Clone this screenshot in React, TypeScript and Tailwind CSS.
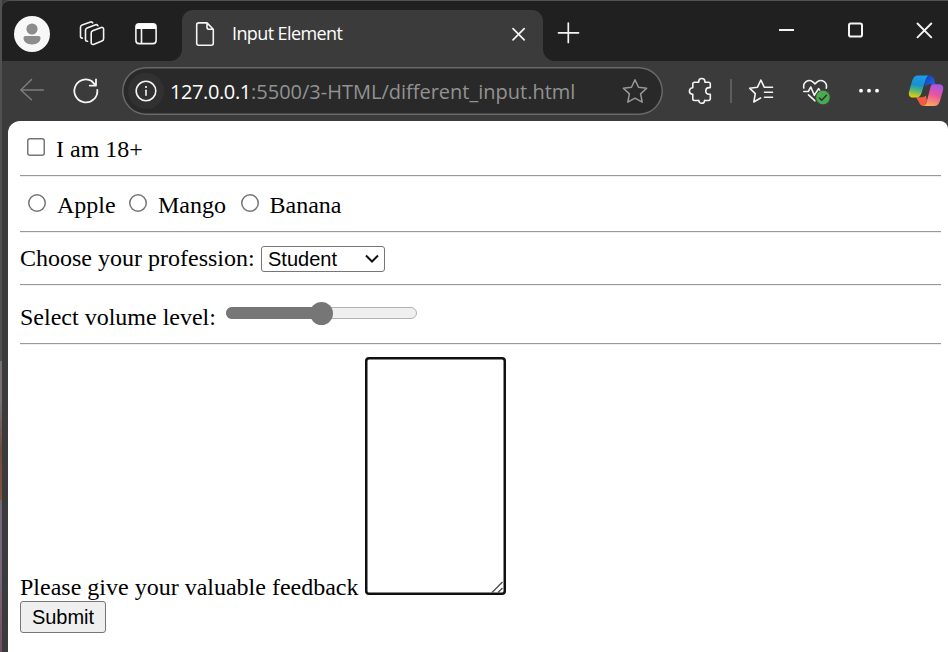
import type { ReactNode } from 'react';

type IconProps = { box: string; size?: number; w?: number; className?: string; children: ReactNode };

// Line icon drawn in window coordinates; `box` selects its area of the toolbar.
function Icon({ box, size = 36, w, className = '', children }: IconProps) {
  return (
    <svg
      viewBox={box}
      width={w ?? size}
      height={size}
      fill="none"
      stroke="#f4f4f4"
      strokeWidth="1.6"
      strokeLinecap="round"
      strokeLinejoin="round"
      className={`shrink-0 ${className}`}
    >
      {children}
    </svg>
  );
}

function TitleBar() {
  return (
    <div className="flex h-[60px] shrink-0 items-start bg-[#202020] pl-3">
      <Icon box="14 16 36 36" className="mt-[15px]">
        <circle cx="32" cy="34" r="18" fill="#f7f7f7" stroke="none" />
        <circle cx="32" cy="29" r="5.6" fill="#8c8c8c" stroke="none" />
        <path d="M25.5 36h13a2 2 0 0 1 2 2c0 4-3.8 6.4-8.5 6.4S23.500 42 23.500 38a2 2 0 0 1 2-2z" fill="#8c8c8c" stroke="none" />
      </Icon>
      <Icon box="74 16 36 36" className="mt-[15px] ml-6">
        <path d="M92.600 30.700l8.700-3.200a1.700 1.700 0 0 1 2.300 1.600v9.600a2.500 2.500 0 0 1-1.700 2.300l-8.400 3.400a1.700 1.700 0 0 1-2.300-1.600v-9.700a2.500 2.500 0 0 1 1.400-2.400z" />
        <path d="M87.600 41.300h-.5a1.600 1.600 0 0 1-1.600-1.600v-9.500a2.500 2.500 0 0 1 1.600-2.300l8.600-3.200a1.800 1.800 0 0 1 2.200 1" />
        <path d="M82.400 38.100h-.3a1.600 1.600 0 0 1-1.600-1.600v-9.300a2.500 2.500 0 0 1 1.600-2.300l8.400-2.900a1.800 1.800 0 0 1 2.200.9" />
      </Icon>
      <Icon box="128 16 36 36" className="mt-[15px] ml-[18px]">
        <rect x="135.900" y="23.900" width="20.200" height="19.700" rx="3.200" />
        <path d="M136 29v-2a3 3 0 0 1 3-3h14a3 3 0 0 1 3 3v2z" fill="#fff" stroke="none" />
        <path d="M141.500 29v14" />
      </Icon>
      <div className="mt-12 ml-[6px] h-3 w-3 bg-[radial-gradient(circle_at_0_0,#202020_11.500px,#3b3b3b_12.500px)]" />
      <div className="mt-[9px] flex h-[51px] w-[360.500px] shrink-0 items-center rounded-t-[11px] bg-[#3b3b3b] pl-[5px]">
        <Icon box="187 16 36 36" className="-mt-[3px]">
          <path d="M207 22.900h-8.300a2 2 0 0 0-2 2v18.300a2 2 0 0 0 2 2h12.600a2 2 0 0 0 2-2v-14zM207 22.900v4.300a2 2 0 0 0 2 2h4.300" />
        </Icon>
        <span className="-mt-[5px] ml-[9px] w-[270px] whitespace-nowrap font-['Open_Sans',sans-serif] text-[18px] leading-6 tracking-[-0.6px] text-white">
          Input Element
        </span>
        <Icon box="507 22 24 24" size={24} className="-mt-[3px] ml-[5px]">
          <path d="M513 28.700l11.200 11.200M524.200 28.700L513 39.900" strokeWidth="1.700" />
        </Icon>
      </div>
      <div className="mt-12 h-3 w-3 bg-[radial-gradient(circle_at_12px_0,#202020_11.500px,#3b3b3b_12.500px)]" />
      <Icon box="555 20 26 26" size={26} className="mt-[19px]">
        <path d="M558.500 32.800h20M568.300 23v19.500" strokeWidth="1.700" />
      </Icon>
      <Icon box="775 18 24 24" size={24} className="mt-[17px] ml-[194.500px]">
        <path d="M779 30h15" strokeWidth="2" strokeLinecap="butt" />
      </Icon>
      <Icon box="843 18 24 24" size={24} className="mt-[17px] ml-11">
        <rect x="849" y="23.500" width="13" height="13" rx="1.800" strokeWidth="2" />
      </Icon>
      <Icon box="912 18 24 24" size={24} className="mt-[17px] ml-[45px]">
        <path d="M917.500 23.500l13.800 13.800M931.300 23.500l-13.800 13.800" strokeWidth="1.900" />
      </Icon>
    </div>
  );
}

function CopilotLogo() {
  return (
    <svg viewBox="908 73 36 36" width="36" height="36" className="ml-[21px] shrink-0">
      <defs>
        <linearGradient id="left" gradientUnits="userSpaceOnUse" x1="920" y1="76" x2="916" y2="98">
          <stop offset="0" stopColor="#1a9dec" />
          <stop offset="0.4" stopColor="#1790cf" />
          <stop offset="0.65" stopColor="#4cb580" />
          <stop offset="1" stopColor="#f4d000" />
        </linearGradient>
        <linearGradient id="right" gradientUnits="userSpaceOnUse" x1="938" y1="84" x2="931" y2="106">
          <stop offset="0" stopColor="#a553ee" />
          <stop offset="0.5" stopColor="#e8569c" />
          <stop offset="1" stopColor="#ffa75c" />
        </linearGradient>
        <linearGradient id="top" gradientUnits="userSpaceOnUse" x1="926" y1="76" x2="935" y2="84">
          <stop offset="0" stopColor="#1740b8" />
          <stop offset="1" stopColor="#2263e5" />
        </linearGradient>
      </defs>
      <path d="M925 75.500h4.500c2.400 0 3.700 1.300 4.400 3.500l1.600 5.200h-5c-2 0-3.800.6-5.200 2.300z" fill="url(#top)" />
      <path d="M916 97.300h4.500c1.800 0 3.300-.3 5.500-1.500l1 5-2.500 5.200h-1c-2.300 0-3.600-1.200-4.300-3.400z" fill="#f45b43" />
      <path d="M918 75.500h10.500c-1.500.8-2.400 2.400-3 4.500l-4 13c-1 3-2.700 4.500-5.500 4.500h-3.200c-3.400 0-4.600-2.600-3.700-6l3-10.500c1-3.500 2.800-5.500 5.900-5.500z" fill="url(#left)" />
      <path d="M933.200 84.200h5.900c3.500 0 4.800 2.600 3.900 6l-3 10.500c-1 3.600-2.800 5.300-5.900 5.300h-10.600c1.800-.7 2.700-2.300 3.300-4.500l3.200-12.500c.7-3 1.300-4.800 3.200-4.800z" fill="url(#right)" />
    </svg>
  );
}

function AddressBar() {
  return (
    <div className="flex h-[60px] shrink-0 items-center bg-[#3b3b3b] pl-3">
      <Icon box="14 73 36 36">
        <path d="M43.300 90H20.800M31.500 79.500L20.800 90l10.700 9.800" stroke="#7d7d7d" strokeWidth="1.500" />
      </Icon>
      <Icon box="68 73 36 36" className="ml-[18px]">
        <path d="M97.300 89.800a11.500 11.500 0 1 1-5.500-8.700M96 79.300v6.300h-6.300M91.500 81l4.500 4.600" strokeWidth="1.800" />
      </Icon>
      <div className="ml-[18px] flex h-12 w-[541px] shrink-0 items-center rounded-full bg-[#292929] pl-[6px] shadow-[inset_0_0_0_1.500px_#696969]">
        <div className="h-9 w-9 shrink-0 rounded-full bg-[#313131]">
          <Icon box="128 73 36 36">
            <circle cx="146" cy="91" r="9.800" />
            <path d="M146 90.300v5" />
            <circle cx="146" cy="87" r="1.100" fill="#fff" stroke="none" />
          </Icon>
        </div>
        <div className="mt-[2px] ml-[6px] w-[447px] whitespace-nowrap font-['Open_Sans',sans-serif] text-[20px] leading-7 text-[#929292]">
          <span className="inline-block w-[81px] tracking-[-0.4px] text-white">127.0.0.1</span>
          <span>:5500/3-HTML/different_input.html</span>
        </div>
        <Icon box="617 73 36 36">
          <path d="M635 79.800l3.500 7.500 8.200 1-6.100 5.600 1.600 8.300-7.200-4-7.200 4 1.600-8.300-6.100-5.600 8.200-1z" stroke="#999" strokeWidth="1.500" />
        </Icon>
      </div>
      <Icon box="682 73 36 36" className="ml-[19px]">
        <path d="M694.500 82.200h4.200v-.6a3.100 3.100 0 0 1 6.200 0v.6h3.700a1.700 1.700 0 0 1 1.700 1.700v3.700h-1.200a3.300 3.300 0 0 0 0 6.600h1.200v4.600a1.700 1.700 0 0 1-1.700 1.700h-4v-.1a2.900 2.900 0 0 1-5.800 0v.1h-4.300a1.700 1.700 0 0 1-1.700-1.700v-4.600h-.2a3.200 3.200 0 0 1 0-6.400h.2v-3.900a1.700 1.700 0 0 1 1.700-1.700z" />
      </Icon>
      <div className="ml-3 h-6 w-[2px] shrink-0 bg-[#5d5d5d]" />
      <Icon box="743 73 36 36" className="ml-[11px]">
        <path d="M772.500 87.200h-8.300l-3.300-7.200-3.400 7.200-7.900 1 5.700 5.500-1.500 8.300 6.800-4M764.500 92.300h8M764.500 97.300h8" />
      </Icon>
      <Icon box="797 73 36 36" className="ml-[18px]">
        <path d="M803.800 88c-1.100-5.400 4.200-9.500 9-6.200l2.200 2 2.200-2c4.800-3.400 10.500.8 9.100 6.300M803.800 91.500h4.500l2.500-4.500 3.500 8.300 4.300-6.700 2 2.900h4.400M808.500 94.800l6.500 6" />
        <circle cx="823" cy="97.500" r="7.300" fill="#49aa4e" stroke="#3b3b3b" strokeWidth="0.800" />
        <path d="M819.500 98l2.200 2.200 4.800-4.900" stroke="#303030" strokeWidth="1.500" />
      </Icon>
      <Icon box="851 73 36 36" className="ml-[18px]">
        <g fill="#fff" stroke="none">
          <circle cx="861" cy="90.700" r="1.900" />
          <circle cx="869" cy="90.700" r="1.900" />
          <circle cx="877" cy="90.700" r="1.900" />
        </g>
      </Icon>
      <CopilotLogo />
    </div>
  );
}

function Rule() {
  return <div className="h-[2px] w-[921px] shrink-0 border-t border-b border-t-[#9a9a9a] border-b-[#eee]" />;
}

function Radio({ label, gap }: { label: string; gap: string }) {
  return (
    <label className={`flex shrink-0 items-start ${gap}`}>
      <span className="mt-[3px] h-[18px] w-[18px] rounded-full shadow-[inset_0_0_0_1.500px_#767676]" />
      <span className="ml-[11px]">{label}</span>
    </label>
  );
}

function FormPage() {
  return (
    <main className="ml-[6px] flex grow flex-col items-start rounded-tl-[12px] rounded-tr-[8px] bg-white pl-3 font-['Liberation_Serif',serif] text-[24px] leading-7 whitespace-nowrap text-black">
      <div className="flex h-[54px] shrink-0 items-start pt-[14px]">
        <span className="mt-[3px] ml-[7px] h-[18px] w-[18px] rounded-[3px] shadow-[inset_0_0_0_1.500px_#767676]" />
        <span className="ml-[11px]">I am 18+</span>
      </div>
      <Rule />
      <div className="flex h-[54px] shrink-0 items-start pt-[14px]">
        <Radio label="Apple" gap="ml-2 w-[101px]" />
        <Radio label="Mango" gap="w-[111.500px]" />
        <Radio label="Banana" gap="" />
      </div>
      <Rule />
      <div className="flex h-[51px] shrink-0 items-start pt-[11px]">
        <span className="w-[241px]">Choose your profession:</span>
        <div className="mt-[2px] flex h-[26px] w-[124px] items-center justify-between rounded-[3px] border border-[#767676] pr-[5px] pl-[6px] font-['Liberation_Sans',sans-serif] text-[20px] leading-6">
          Student
          <svg width="14" height="10" viewBox="0 0 14 10" fill="none" stroke="#111" strokeWidth="2">
            <path d="M1 1.500l6 6 6-6" />
          </svg>
        </div>
      </div>
      <Rule />
      <div className="flex h-[57px] shrink-0 items-start pt-[17px]">
        <span className="w-[206px]">Select volume level:</span>
        <div className="mt-1 flex h-3 w-[191px] items-center rounded-full border border-[#b2b2b2] bg-[#efefef]">
          <div className="-ml-px h-3 w-[89px] shrink-0 rounded-l-full bg-[#767676]" />
          <div className="-ml-[5px] h-[23px] w-[23px] shrink-0 rounded-full bg-[#767676]" />
        </div>
      </div>
      <Rule />
      <div className="flex h-[256px] shrink-0 items-end">
        <span className="w-[345px]">Please give your valuable feedback</span>
        <div className="mb-[6px] flex h-[238px] w-[141px] items-end justify-end rounded-[4px] pr-[3px] pb-[2px] shadow-[inset_0_0_0_2.500px_#101010]">
          <svg width="12" height="12" viewBox="0 0 12 12" fill="none" stroke="#444" strokeWidth="1.200">
            <path d="M1 11.500L11.500 1M7 11.500L11.500 7" />
          </svg>
        </div>
      </div>
      <button className="flex h-8 w-[86px] shrink-0 items-center justify-center rounded-[3px] border border-[#767676] bg-[#efefef] font-['Liberation_Sans',sans-serif] text-[20px] leading-6">
        Submit
      </button>
    </main>
  );
}

export default function App() {
  return (
    <div className="flex h-[652px] w-[948px] overflow-hidden bg-[#3b3b3b]">
      <div className="flex w-[2px] shrink-0 flex-col bg-[#505050]">
        <div className="mt-[361px] h-[41px] bg-[#77706f]" />
        <div className="h-[98px] bg-linear-to-b from-[#717171] via-[#704b44] to-[#835438]" />
        <div className="grow bg-linear-to-b from-[#71697a] via-[#79657a] to-[#704f62]" />
      </div>
      <div className="flex w-[946px] flex-col overflow-hidden rounded-tl-[8px] border-t border-t-[#505354]">
        <TitleBar />
        <AddressBar />
        <FormPage />
      </div>
    </div>
  );
}
